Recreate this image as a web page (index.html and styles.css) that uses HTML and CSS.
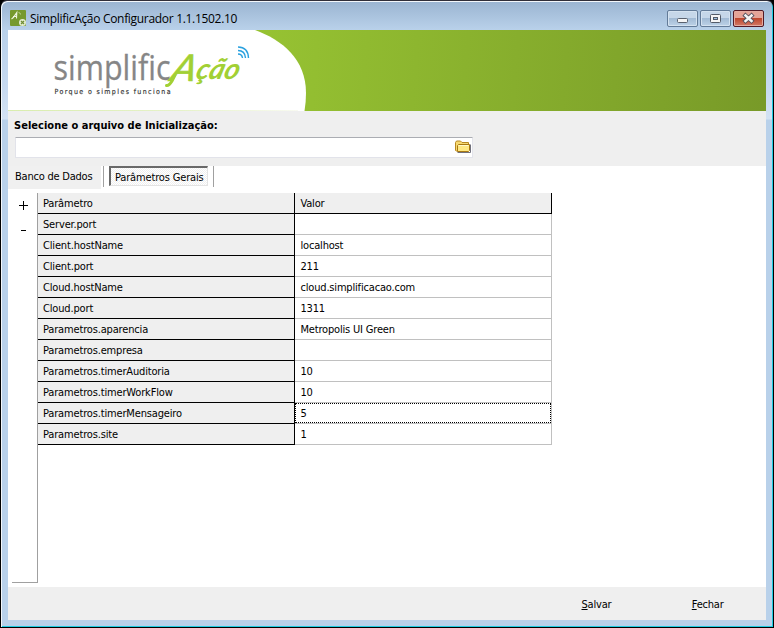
FILE: index.html
```html
<!DOCTYPE html>
<html lang="pt-BR">
<head>
<meta charset="utf-8">
<title>SimplificAção Configurador</title>
<link rel="stylesheet" href="styles.css">
</head>
<body>
<div class="window">
  <header class="titlebar">
    <svg class="app-icon" width="16" height="16" viewBox="0 0 16 16">
      <rect width="16" height="16" rx="1" fill="#76992d"/>
      <path d="M1.500 9C4 7.500 5.500 4.500 6.800 2.500L6.500 8.500M3 6.500h4" fill="none" stroke="#eef4df" stroke-width="1.100"/>
      <path d="M8.500 2.500q2 0 2 2" fill="none" stroke="#c7dda0" stroke-width=".8"/>
      <circle cx="12.500" cy="12.500" r="3.500" fill="#e4edcf"/>
      <path d="M11 11l3 3m0-3l-3 3" stroke="#6e8c34" stroke-width="1.200"/>
    </svg>
    <span class="title">SimplificAção Configurador 1.1.1502.10</span>
    <div class="controls">
      <div class="control"><svg width="29" height="15"><rect x="9.500" y="7.500" width="10" height="4" rx="1" fill="#f5f5f5" stroke="#59616e"/></svg></div>
      <div class="control"><svg width="29" height="15"><rect x="9.500" y="3.500" width="10" height="8" rx="1" fill="#f5f5f5" stroke="#535b68"/><rect x="12.500" y="6.500" width="4" height="2" fill="#9ec0e2" stroke="#535b68"/></svg></div>
      <div class="control close"><svg width="29" height="15"><path d="M11.500 4.500l6 5.500m0-5.500l-6 5.500" stroke="#54505d" stroke-width="4.400" stroke-linecap="square"/><path d="M11.500 4.500l6 5.500m0-5.500l-6 5.500" stroke="#f4f4f4" stroke-width="2.500" stroke-linecap="square"/></svg></div>
    </div>
  </header>
  <main class="client">
    <svg class="banner" width="758" height="81" viewBox="0 0 758 81">
      <defs>
        <linearGradient id="green" gradientUnits="userSpaceOnUse" x1="260" y1="0" x2="758" y2="40"><stop stop-color="#96c232"/><stop offset="1" stop-color="#789a28"/></linearGradient>
        <linearGradient id="edge"><stop stop-color="#d9edae"/><stop offset=".6" stop-color="#e6f2c9"/><stop offset="1" stop-color="#f8faf0"/></linearGradient>
      </defs>
      <rect width="758" height="81" fill="url(#green)"/>
      <path d="M0 0H247C274 10 298 29 298 63Q298 72 296.500 81H0Z" fill="#fff"/>
      <rect y="80" width="290" height="1" fill="url(#edge)"/>
      <text class="logo-gray" x="45.500" y="50" textLength="117" lengthAdjust="spacingAndGlyphs">simplific</text>
      <text class="logo-green" transform="translate(161 51) skewX(-16)"><tspan class="logo-cap" textLength="25" lengthAdjust="spacingAndGlyphs">A</tspan><tspan x="25" y="-2" textLength="43" lengthAdjust="spacingAndGlyphs">ção</tspan></text>
      <path d="M167 45L164 51Q161 56 158.500 55.500" fill="none" stroke="#a2d034" stroke-width="3" stroke-linecap="round"/>
      <g fill="none" stroke="#2aa1df" stroke-width="1.400"><path d="M230 17Q240 17 240.500 28M230 20.500Q237 20.500 237.500 28M230 24Q234 24 234.500 28"/></g>
      <text class="slogan" x="46.500" y="64" textLength="116">Porque o simples funciona</text>
    </svg>
    <section class="file-panel">
      <label class="file-label">Selecione o arquivo de Inicialização:</label>
      <div class="file-input">
        <svg width="17" height="14" viewBox="0 0 17 14">
          <path d="M2.500 12.500h13v-8" fill="none" stroke="#71717c"/>
          <path d="M.5 10.500v-8l1-1.500h4l1.500 1.500h6.500v8.500h-12Z" fill="#f7d970" stroke="#b88922"/>
          <path d="M2.500 11.500v-6l1-1h11v6l-1 1Z" fill="#ffe984" stroke="#a87813"/>
          <path d="M3.500 5.500h10" stroke="#fff9c9"/>
        </svg>
      </div>
    </section>
    <nav class="tabs">
      <div class="tab"><span class="t-banco">Banco de Dados</span></div>
      <div class="tab active"><span class="t-gerais">Parâmetros Gerais</span></div>
      <div class="tab-end"></div>
    </nav>
    <section class="workspace">
      <aside class="row-tools">
        <svg width="9" height="30" viewBox="0 0 9 30"><path d="M0 4.500h9M4.500 0v9M2 29.500h5" stroke="#000"/></svg>
      </aside>
      <div class="grid">
        <div class="row head"><div>Parâmetro</div><div>Valor</div></div>
        <div class="row"><div>Server.port</div><div></div></div>
        <div class="row"><div>Client.hostName</div><div>localhost</div></div>
        <div class="row"><div>Client.port</div><div>211</div></div>
        <div class="row"><div>Cloud.hostName</div><div>cloud.simplificacao.com</div></div>
        <div class="row"><div>Cloud.port</div><div>1311</div></div>
        <div class="row"><div>Parametros.aparencia</div><div>Metropolis UI Green</div></div>
        <div class="row"><div>Parametros.empresa</div><div></div></div>
        <div class="row"><div>Parametros.timerAuditoria</div><div>10</div></div>
        <div class="row"><div>Parametros.timerWorkFlow</div><div>10</div></div>
        <div class="row"><div>Parametros.timerMensageiro</div><div class="focused">5</div></div>
        <div class="row"><div>Parametros.site</div><div>1</div></div>
      </div>
    </section>
    <footer class="actions">
      <span class="action"><u>S</u>alvar</span>
      <span class="action"><u>F</u>echar</span>
    </footer>
  </main>
</div>
</body>
</html>
```
FILE: styles.css
```css
* { box-sizing: border-box; }
body { margin: 0; background: #000; font: 11px "DejaVu Sans Condensed", "DejaVu Sans", sans-serif; font-stretch: condensed; letter-spacing: -.16px; color: #000; }
svg { display: block; flex: none; }
.window { width: 774px; height: 628px; padding: 0 6px; border: 1px solid #000; border-top-color: #302e39; border-radius: 7px 7px 0 0; background: linear-gradient(#9ab4d1, #b9d1ea 29px, #c6d9f0 85px, #d3e2f3 118px, #b9d1ea 119px); box-shadow: inset 1px 1px #f3f7fb, inset -1px -1px #1ecbe1; }
.titlebar { display: flex; height: 29px; padding: 8px 3px 0 3px; }
.app-icon { margin-top: 1px; }
.title { margin: 1px 0 0 4px; font: 12px/18px "Open Sans", sans-serif; letter-spacing: -.31px; white-space: nowrap; }
.controls { display: flex; gap: 2px; margin: 1px 0 0 auto; }
.control { width: 31px; height: 17px; border: 1px solid #637b98; border-radius: 2px; background: linear-gradient(#c6d7e9 0 45%, #a0b9d3 46%, #bdd2e7); box-shadow: inset 0 0 0 1px #d4e2f0; }
.close { border-color: #531925; background: linear-gradient(#e5a397 0 45%, #bd4229 46%, #d27a67); box-shadow: inset 0 0 0 1px #e4aaa0; }
.client { width: 758px; height: 590px; margin-left: 1px; background: #fff; display: flex; flex-direction: column; }
.banner { width: 758px; height: 81px; letter-spacing: 0; }
.logo-gray { font: 35px "Open Sans", sans-serif; fill: #868686; stroke: #868686; stroke-width: .3px; }
.logo-green { font: italic bold 29px Lato, sans-serif; fill: #a2d034; }
.logo-cap { font-size: 37px; font-weight: 400; stroke: #a2d034; stroke-width: .6px; }
.slogan { font: 7px "DejaVu Sans Condensed", sans-serif; fill: #333; stroke: #333; stroke-width: .15px; }
.file-panel { height: 55px; background: #efefef; padding: 7px 6px 0; }
.file-label { display: block; height: 19px; font: bold 11px/15px "DejaVu Sans Condensed", sans-serif; font-stretch: condensed; letter-spacing: .02px; }
.file-input { display: flex; justify-content: flex-end; width: 458px; height: 21px; margin-left: 1px; padding: 2px 0 0; border: 1px solid #e2e3ea; border-top-color: #abadb3; border-radius: 1px; background: #fff; }
.tabs { display: flex; height: 27px; }
.tab { width: 93px; height: 23px; padding-left: 7px; background: #f0f0f0; line-height: 21px; letter-spacing: -.22px; white-space: nowrap; }
.tab.active { width: 111px; height: 21px; margin-left: 2px; padding: 0 5px; border-left: 1px solid #a0a0a0; background: #fff; letter-spacing: -.16px; }
.t-gerais { display: block; width: 99px; height: 20px; padding-left: 4px; border: 1px solid #e3e3e3; border-top: 2px solid #696969; border-left: 2px solid #696969; background: repeating-conic-gradient(#f0f0f0 0 25%, #fff 0 50%) 0 0 / 2px 2px; line-height: 19px; }
.tab-end { width: 1px; height: 21px; margin-left: -1px; background: #a0a0a0; }
.workspace { display: flex; height: 394px; padding-left: 4px; }
.row-tools { width: 26px; height: 390px; padding: 8px 0 0 7px; border-right: 1px solid #a0a0a0; border-bottom: 1px solid #a0a0a0; }
.grid { width: 514px; }
.row { display: grid; grid-template-columns: 257px 257px; height: 21px; line-height: 22px; white-space: nowrap; }
.row > div { height: 21px; padding-left: 5px; border-right: 1px solid silver; border-bottom: 1px solid silver; }
.row > div + div { letter-spacing: -.29px; padding-left: 5.5px; }
.row > div + div { letter-spacing: -.18px; }
.row > div:first-child, .row.head > div { background: #efefef; border-color: #000; }
.row > .focused { position: relative; }
.focused::after { content: ""; position: absolute; inset: 0; border: 1px dotted #000; }
.actions { display: flex; gap: 18px; height: 33px; padding-left: 573.5px; background: #efefef; line-height: 35px; }
.action { width: 92.5px; letter-spacing: -.2px; }
.action + .action { padding-left: 9.5px; }
.actions { gap: 18px; }
```
